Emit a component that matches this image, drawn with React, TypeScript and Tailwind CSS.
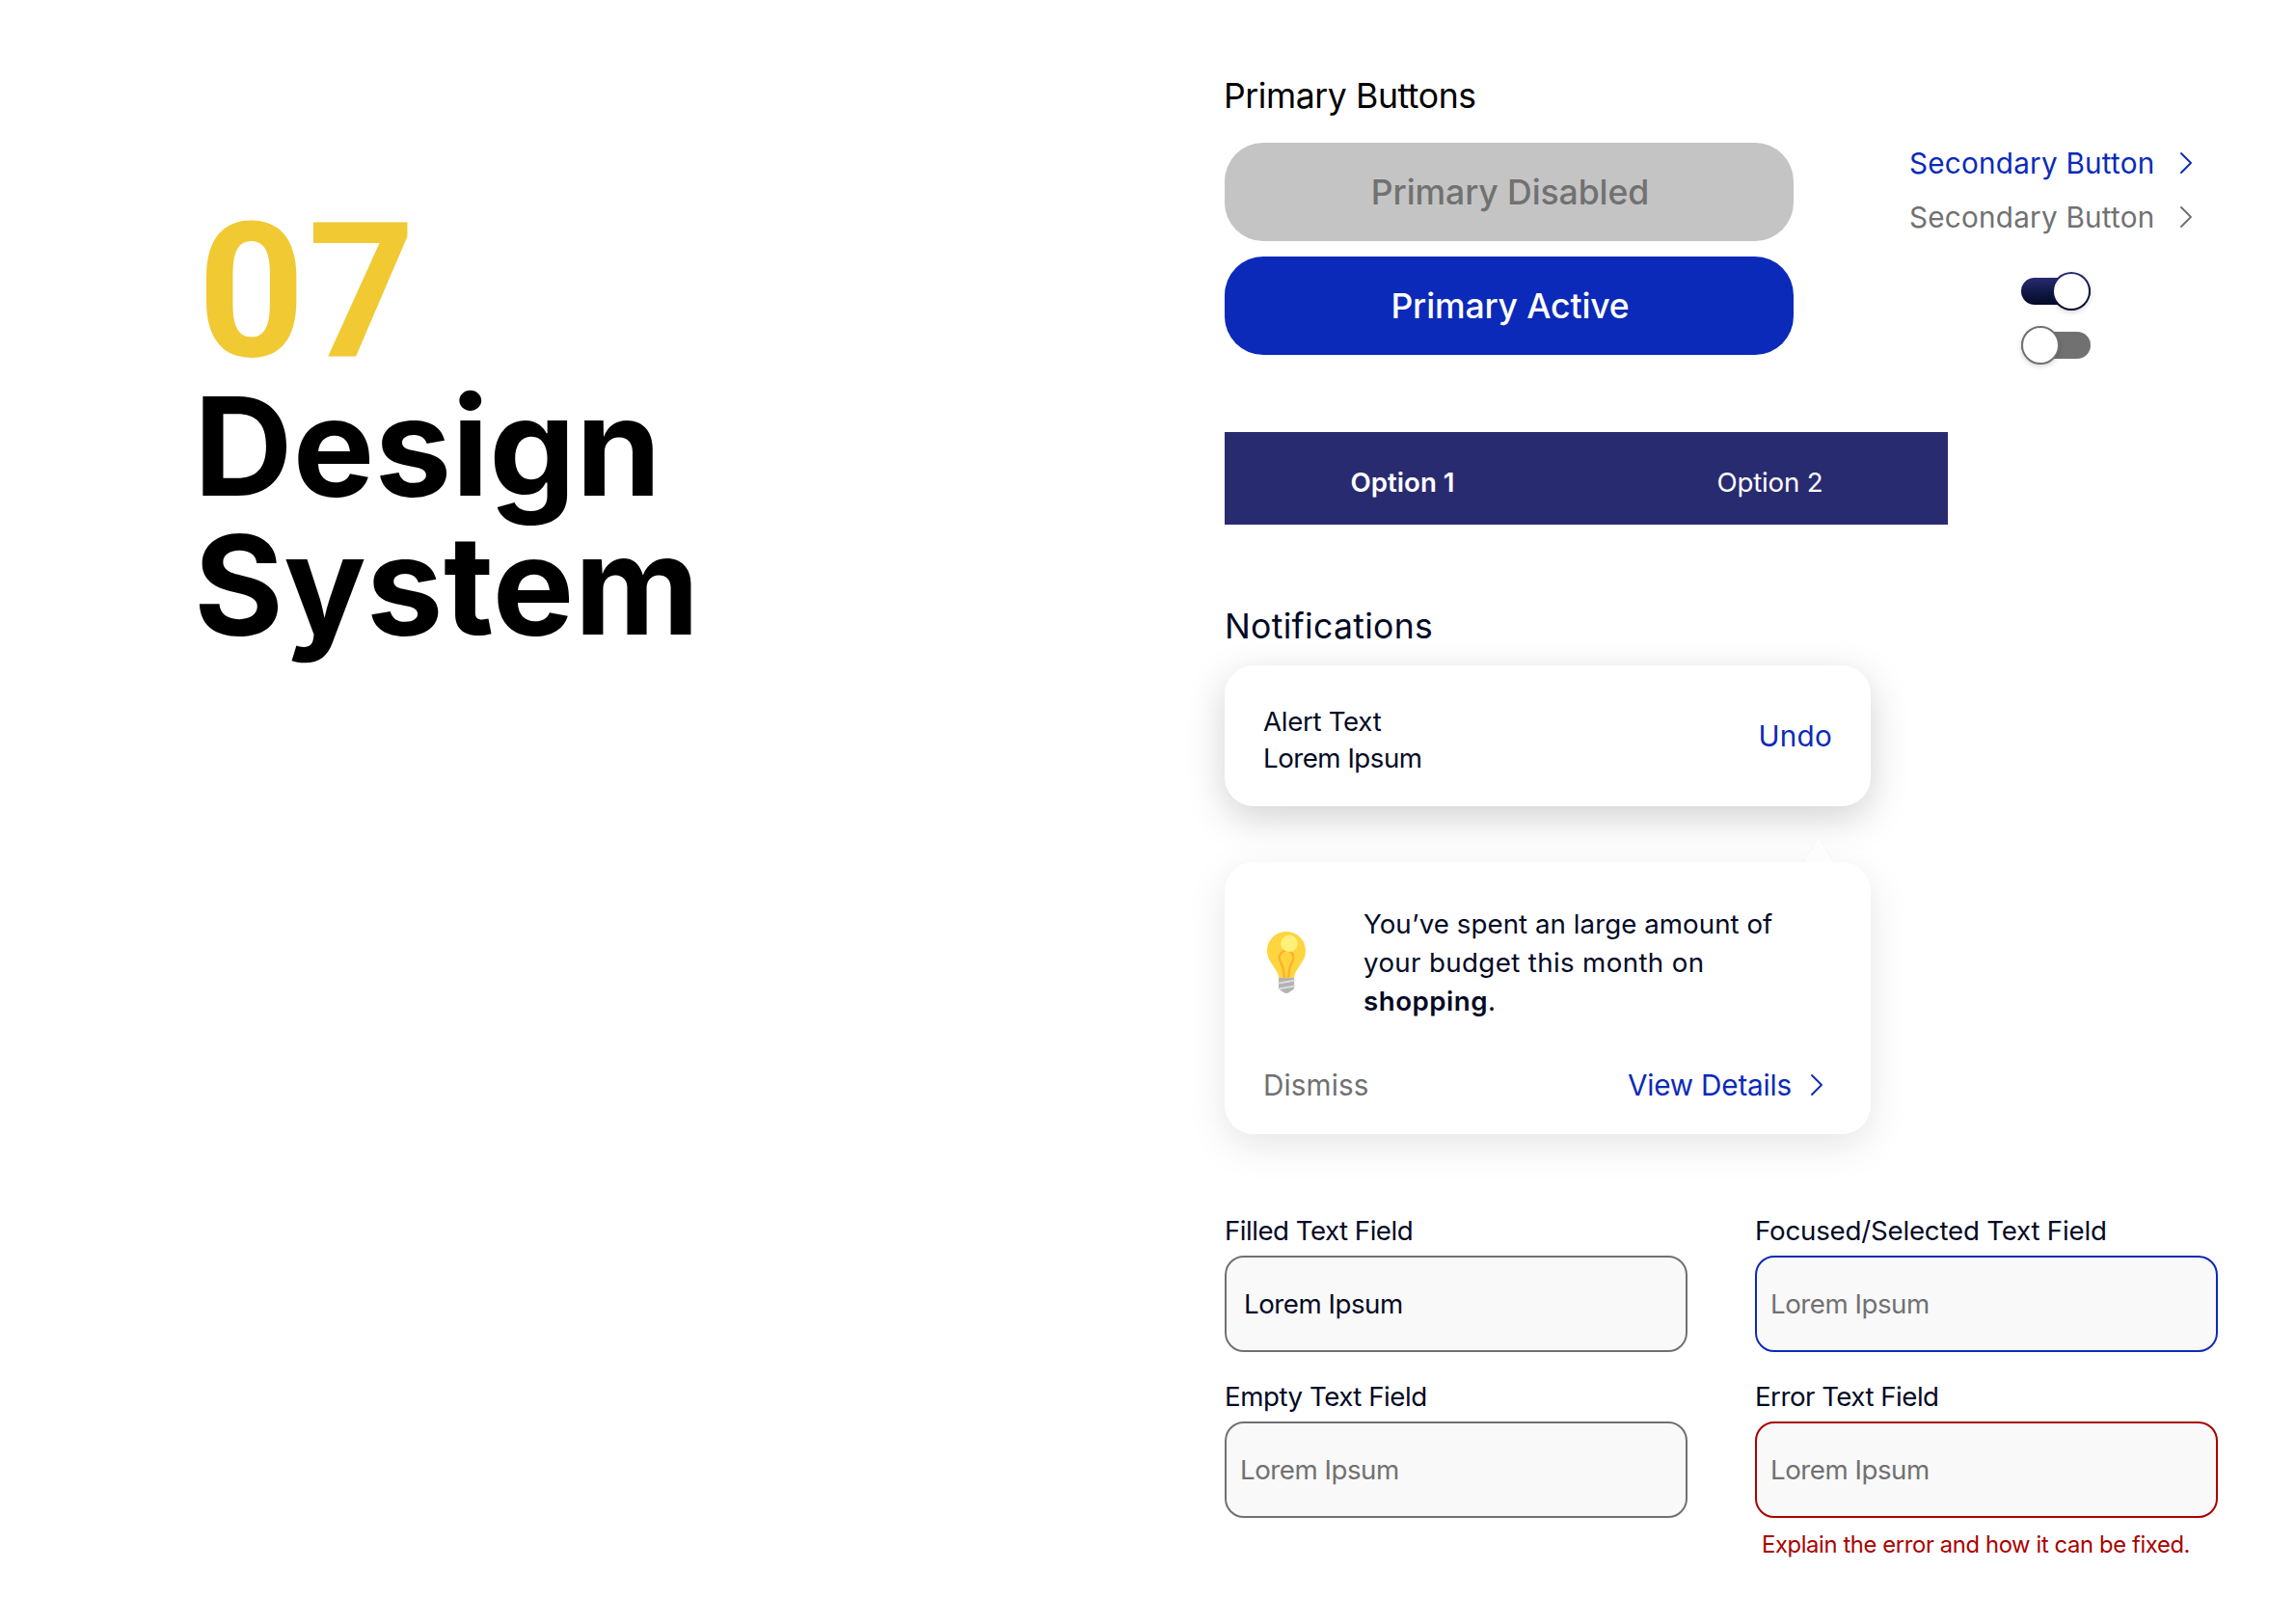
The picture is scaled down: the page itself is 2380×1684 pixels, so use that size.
import React from "react";

function Chevron() {
  return (
    <svg viewBox="0 0 14 24" className="h-6 w-3.5 shrink-0" fill="none" stroke="currentColor" strokeWidth="1.9" strokeLinecap="round" strokeLinejoin="round">
      <path d="M2 2 L12 12 L2 22" />
    </svg>
  );
}

function LightBulb() {
  return (
    <svg viewBox="0 0 40 64" className="h-16 w-10" fill="none">
      <path d="M20 0C9 0 0 8.800 0 19.800c0 7.200 3.600 11.800 7.300 17.400C10.300 41.700 12 44 12.400 49h15.200c.4-5 2.100-7.300 5.100-11.800C36.400 31.600 40 27 40 19.800 40 8.800 31 0 20 0Z" fill="#FDD53F" />
      <path d="M17.800 47.500C17.500 39 15.800 34.500 13.800 31.300 11.600 27.600 12.800 22.300 17 20.200c2-.8 4-.8 6 0 4.200 2.100 5.400 7.400 3.200 11.100-2 3.200-3.700 7.700-4 16.200" stroke="#FFB229" strokeWidth="2.400" />
      <circle cx="23" cy="12.300" r="8.700" fill="#FFF07A" />
      <path d="M12 48h16v10.200c0 1-.5 1.800-1.500 2.300L22 63.500c-1.200.7-2.800.7-4 0l-4.500-3c-1-.5-1.500-1.300-1.500-2.300Z" fill="#B2B2B2" />
      <path d="M12 53.600 28.600 50.600M12 59.400 28.600 56.400" stroke="#E0E0E0" strokeWidth="1.900" strokeLinecap="round" />
    </svg>
  );
}

function ToggleOn() {
  return (
    <div className="relative flex h-10 w-[72px] items-center">
      <div className="h-7 w-full rounded-full bg-gradient-to-b from-[#292B71] to-[#030A25]" />
      <div className="absolute top-0 right-0 size-10 rounded-full bg-gradient-to-b from-[#292B71] to-[#030A25] p-0.5 shadow-[0_2px_5px_rgba(0,0,0,0.16)]">
        <div className="size-full rounded-full bg-white" />
      </div>
    </div>
  );
}

function ToggleOff() {
  return (
    <div className="relative flex h-10 w-[72px] items-center">
      <div className="h-7 w-full rounded-full bg-[#717171]" />
      <div className="absolute top-0 left-0 size-10 rounded-full border-2 border-[#717171] bg-white shadow-[0_2px_5px_rgba(0,0,0,0.16)]" />
    </div>
  );
}

function Field({ label, labelClass, boxClass, valueClass }: { label: string; labelClass: string; boxClass: string; valueClass: string }) {
  return (
    <div className="w-[480px]">
      <div className={`text-[27.7px] leading-10 whitespace-nowrap ${labelClass}`}>{label}</div>
      <div className={`mt-1.5 flex h-[100px] items-center rounded-[20px] border-2 bg-[#F9F9F9] ${boxClass}`}>
        <span className={`text-[27.7px] leading-10 tracking-[-0.48px] ${valueClass}`}>Lorem Ipsum</span>
      </div>
    </div>
  );
}

export default function App() {
  return (
    <main className="flex h-[1684px] w-[2380px] overflow-hidden bg-white font-['Inter','Liberation_Sans',sans-serif] text-[#030A25]">
      <section className="w-[1270px] shrink-0 pt-[215px] pl-[201px] text-black">
        <div className="pl-1 font-['Roboto','Inter',sans-serif] text-[194px] leading-[175px] font-bold tracking-[3px] text-[#F0C933]">07</div>
        <h1 className="text-[142px] leading-[144px] font-bold tracking-[0.3px]">
          Design
          <br />
          System
        </h1>
      </section>

      <section className="flex-1 pt-[76px]">
        <h2 className="-ml-px text-[35.6px] leading-[48px] tracking-[-0.42px] text-black">Primary Buttons</h2>
        <div className="mt-6 flex">
          <div className="flex w-[590px] flex-col gap-4 text-[35.6px] font-medium">
            <button className="h-[102px] rounded-[40px] bg-[#C4C4C4] pt-px pl-0.5 tracking-[-0.1px] text-[#717171]">Primary Disabled</button>
            <button className="h-[102px] rounded-[40px] bg-[#0B2AB9] pt-px pl-0.5 tracking-[-0.15px] text-white">Primary Active</button>
          </div>
          <div className="ml-[120px] pt-px">
            <div className="flex flex-col gap-4 text-[29.7px] leading-10 tracking-[0.22px]">
              <div className="flex w-[294px] items-center justify-between whitespace-nowrap text-[#0B2AB9]">
                <span>Secondary Button</span>
                <Chevron />
              </div>
              <div className="flex w-[294px] items-center justify-between whitespace-nowrap text-[#717171]">
                <span>Secondary Button</span>
                <Chevron />
              </div>
            </div>
            <div className="mt-[37px] flex flex-col gap-4 pl-[116px]">
              <ToggleOn />
              <ToggleOff />
            </div>
          </div>
        </div>

        <nav className="mt-[70px] flex h-24 w-[750px] items-center bg-[#292B71] pt-[9px] text-[27.7px] text-white">
          <span className="flex-1 pr-1.5 text-center font-semibold">Option 1</span>
          <span className="flex-1 pl-1.5 text-center tracking-[-0.19px]">Option 2</span>
        </nav>

        <h2 className="mt-[82px] text-[35.6px] leading-[48px] tracking-[0.3px]">Notifications</h2>

        <div className="mt-4 flex h-[146px] w-[670px] items-center justify-between rounded-[30px] bg-white pr-10 pl-10 shadow-[0_12px_40px_rgba(0,0,0,0.18)]">
          <div className="pt-2 text-[27.7px] leading-[38px]">
            <div className="tracking-[-0.32px]">Alert Text</div>
            <div className="tracking-[-0.5px]">Lorem Ipsum</div>
          </div>
          <span className="text-[29.7px] tracking-[0.2px] text-[#0B2AB9]">Undo</span>
        </div>

        <div className="relative mt-[58px] h-[282px] w-[670px] rounded-[30px] bg-white pt-11 shadow-[0_12px_40px_rgba(0,0,0,0.1)]">
          <svg viewBox="0 0 34 28" className="absolute -top-[27px] left-[599px] h-7 w-[34px]">
            <path d="M17 1 L33 27 L1 27 Z" fill="#FDFDFD" />
            <path d="M1 27 L17 1 L33 27" fill="none" stroke="#F7F7F7" strokeWidth="1" />
          </svg>
          <div className="flex pl-11">
            <div className="w-[100px] pt-7">
              <LightBulb />
            </div>
            <p className="text-[27.7px] leading-10 whitespace-nowrap">
              <span className="tracking-[0.04px]">You’ve spent an large amount of</span>
              <br />
              <span className="tracking-[0.36px]">your budget this month on</span>
              <br />
              <b className="font-semibold tracking-[0.5px]">shopping</b>.
            </p>
          </div>
          <div className="mt-[47px] flex items-center justify-between pr-[49px] pl-10 text-[29.7px] leading-10">
            <span className="tracking-[0.1px] text-[#717171]">Dismiss</span>
            <span className="flex items-center gap-[19px] tracking-[-0.2px] text-[#0B2AB9]">
              View Details
              <Chevron />
            </span>
          </div>
        </div>

        <div className="mt-20 grid grid-cols-[480px_480px] gap-x-[70px] gap-y-[26px]">
          <Field label="Filled Text Field" labelClass="tracking-[-0.52px]" boxClass="border-[#717171] pl-[18px]" valueClass="" />
          <Field label="Focused/Selected Text Field" labelClass="tracking-[-0.22px]" boxClass="border-[#0B2AB9] pl-3.5" valueClass="text-[#717171]" />
          <Field label="Empty Text Field" labelClass="tracking-[-0.48px]" boxClass="border-[#717171] pl-3.5" valueClass="text-[#717171]" />
          <div>
            <Field label="Error Text Field" labelClass="tracking-[-0.52px]" boxClass="border-[#AA0000] pl-3.5" valueClass="text-[#717171]" />
            <p className="mt-3 pl-[7px] text-[23.8px] leading-8 tracking-[-0.38px] whitespace-nowrap text-[#AA0000]">Explain the error and how it can be fixed.</p>
          </div>
        </div>
      </section>
    </main>
  );
}
